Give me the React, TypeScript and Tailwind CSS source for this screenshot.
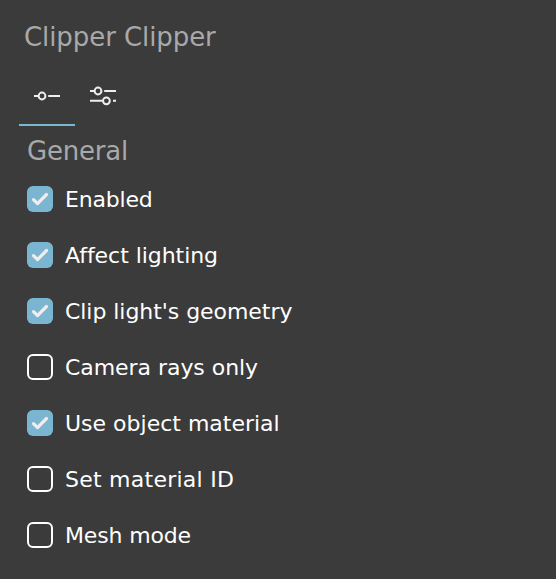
const items: [string, boolean, string][] = [
  ["Enabled", true, "tracking-[-0.2px]"],
  ["Affect lighting", true, "tracking-[-0.05px]"],
  ["Clip light's geometry", true, "tracking-[-0.05px]"],
  ["Camera rays only", false, "tracking-[-0.05px]"],
  ["Use object material", true, "tracking-[0px]"],
  ["Set material ID", false, "tracking-[0.25px]"],
  ["Mesh mode", false, "tracking-[-0.15px]"],
];

export default function App() {
  return (
    <main className="h-[579px] w-full overflow-hidden bg-[#3b3b3b] pt-[19px] font-['DejaVu_Sans',sans-serif]">
      <h1 className="h-9 pl-6 text-[26px] leading-9 tracking-[-0.08px] text-[#a9a9a9]">Clipper Clipper</h1>
      <nav className="mt-[13px] ml-[19px] flex h-[58px]">
        <button className="flex w-14 items-center justify-center border-b-2 border-[#7ab8d2]">
          <svg width="28" height="20" viewBox="0 0 28 20" fill="none" stroke="#eeeeee" strokeWidth="2">
            <path d="M1 10h4M15.2 10H27" />
            <circle cx="9" cy="10" r="3.4" />
          </svg>
        </button>
        <button className="flex w-14 items-center justify-center border-b-2 border-transparent">
          <svg width="28" height="20" viewBox="0 0 28 20" fill="none" stroke="#eeeeee" strokeWidth="2">
            <path d="M1 5h4M15.2 5H27M1 14.8h12.5M24 14.8h3" />
            <circle cx="9" cy="5" r="3.4" />
            <circle cx="17.4" cy="14.8" r="3.4" />
          </svg>
        </button>
      </nav>
      <h2 className="mt-[7px] h-[47px] pl-[27px] text-[26px] leading-[36px] tracking-[-0.2px] text-[#a9a9a9]">General</h2>
      <div className="flex flex-col gap-[18px] pl-[27px]">
        {items.map(([label, on, tracking]) => (
          <label key={label} className="flex h-[38px] items-center gap-3 text-[22px] text-white">
            <span className={on ? "size-[26px] shrink-0 rounded-[6px] bg-[#7ab6d2]" : "size-[26px] shrink-0 rounded-[6px] border-2 border-white"}>
              {on && (
                <svg width="26" height="26" viewBox="0 0 26 26" fill="none" stroke="#eeeeee" strokeWidth="3.2" strokeLinecap="round" strokeLinejoin="round">
                  <path d="M6.5 13.7l4 3.9L19.5 8.5" />
                </svg>
              )}
            </span>
            <span className={`pt-0.5 leading-[36px] whitespace-nowrap ${tracking}`}>{label}</span>
          </label>
        ))}
      </div>
    </main>
  );
}
